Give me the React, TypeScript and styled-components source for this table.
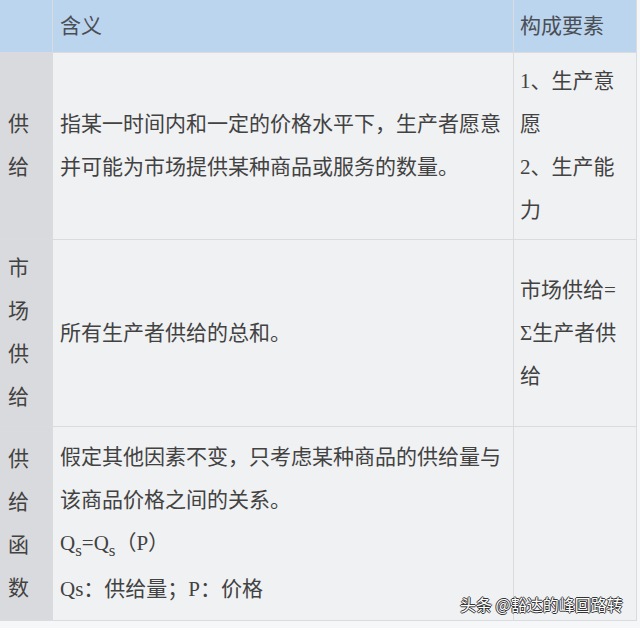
import React from "react";
import styled, { createGlobalStyle } from "styled-components";

const Global = createGlobalStyle`
  html, body { margin: 0; padding: 0; background: #f6f7f9; }
  body { width: 640px; height: 628px; overflow: hidden; }
`;

const Page = styled.div`
  position: relative;
  width: 640px;
  height: 628px;
  background: #f6f7f9;
  font-family: "Liberation Serif", "Noto Sans CJK SC", serif;
  font-size: 21px;
  color: #424242;
`;

const Table = styled.div`
  display: grid;
  grid-template-columns: 52px 460px 122px;
  grid-template-rows: 52px 186px 186px 193px;
  gap: 1px;
  width: 637px;
  padding: 0 1px 1px 0;
  box-sizing: border-box;
  background: #d9dbdf;
`;

const Cell = styled.div<{ $kind: "head" | "side" | "body" }>`
  display: flex;
  flex-direction: column;
  justify-content: center;
  padding: 0 7px;
  line-height: 43px;
  background: ${(p) =>
    p.$kind === "head" ? "#bcd5ef" : p.$kind === "side" ? "#d9dadd" : "#f0f1f3"};
  color: ${(p) => (p.$kind === "head" ? "#4a4e55" : "#424242")};
  white-space: nowrap;
`;

const SideCell = styled(Cell)`
  padding: 0 0 0 8px;
`;

const ThirdCell = styled(Cell)`
  padding: 0 0 0 6px;
`;

const Line = styled.div<{ $tall?: boolean }>`
  height: ${(p) => (p.$tall ? "46px" : "43px")};
`;

const Sub = styled.sub`
  font-size: 17px;
  vertical-align: -6px;
  line-height: 0;
`;

const Watermark = styled.div`
  position: absolute;
  left: 460px;
  top: 593px;
  font-family: "Noto Sans CJK SC", sans-serif;
  font-size: 16px;
  line-height: 22px;
  color: #ffffff;
  text-shadow: 1px 0 0 #333, -1px 0 0 #333, 0 1px 0 #333, 0 -1px 0 #333;
  white-space: nowrap;
`;

export default function App() {
  return (
    <>
      <Global />
      <Page>
        <Table>
          <Cell $kind="head" />
          <Cell $kind="head">含义</Cell>
          <ThirdCell $kind="head">构成要素</ThirdCell>

          <SideCell $kind="side">
            <Line>供</Line>
            <Line>给</Line>
          </SideCell>
          <Cell $kind="body">
            <Line>指某一时间内和一定的价格水平下，生产者愿意</Line>
            <Line>并可能为市场提供某种商品或服务的数量。</Line>
          </Cell>
          <ThirdCell $kind="body">
            <Line>1、生产意</Line>
            <Line>愿</Line>
            <Line>2、生产能</Line>
            <Line>力</Line>
          </ThirdCell>

          <SideCell $kind="side">
            <Line>市</Line>
            <Line>场</Line>
            <Line>供</Line>
            <Line>给</Line>
          </SideCell>
          <Cell $kind="body">
            <Line>所有生产者供给的总和。</Line>
          </Cell>
          <ThirdCell $kind="body">
            <Line>市场供给=</Line>
            <Line>Σ生产者供</Line>
            <Line>给</Line>
          </ThirdCell>

          <SideCell $kind="side">
            <Line>供</Line>
            <Line>给</Line>
            <Line>函</Line>
            <Line>数</Line>
          </SideCell>
          <Cell $kind="body">
            <Line>假定其他因素不变，只考虑某种商品的供给量与</Line>
            <Line>该商品价格之间的关系。</Line>
            <Line $tall>
              Q<Sub>s</Sub>=Q<Sub>s</Sub>（P）
            </Line>
            <Line>Qs：供给量；P：价格</Line>
          </Cell>
          <ThirdCell $kind="body" />
        </Table>
        <Watermark>头条 @豁达的峰回路转</Watermark>
      </Page>
    </>
  );
}
